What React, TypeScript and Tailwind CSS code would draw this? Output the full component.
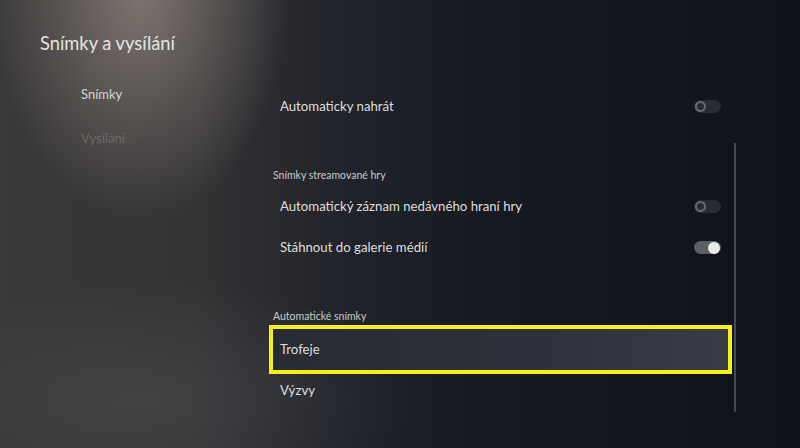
const Toggle = ({ on }: { on?: boolean }) => {
  if (on) {
    return (
      <div className="flex h-[13px] w-[27px] items-center justify-end rounded-full bg-[#5d5f67] pr-[1px]">
        <div className="h-[12px] w-[12px] rounded-full bg-[#ececec]" />
      </div>
    )
  }
  return (
    <div className="flex h-[13px] w-[27px] items-center rounded-full bg-[#2a2c35] pl-[1px]">
      <div className="h-[11px] w-[11px] rounded-full border-2 border-[#686a72]" />
    </div>
  )
}

const Row = ({ label, toggle, focused }: { label: string; toggle?: "on" | "off"; focused?: boolean }) => (
  <div
    className={
      "flex h-[41px] items-center justify-between px-[7px] " +
      (focused
        ? "outline-4 outline-[#f6ef1e] bg-[linear-gradient(to_right,#282b33,#2f323c_60%,#383c46)]"
        : "")
    }
  >
    <span className="text-[13.2px] text-[#dedede]">{label}</span>
    {toggle && <Toggle on={toggle === "on"} />}
  </div>
)

const Header = ({ children }: { children: string }) => (
  <div className="mt-[37px] h-[22px] text-[10.5px] leading-[22px] text-[#c9c9c9]">{children}</div>
)

export default function App() {
  return (
    <div
      className="h-[448px] w-[800px] overflow-hidden bg-[radial-gradient(ellipse_150px_230px_at_140px_-10px,rgba(175,160,150,0.6),transparent),radial-gradient(ellipse_260px_120px_at_150px_400px,rgba(90,92,96,0.35),transparent),linear-gradient(to_right,#3a3839_0%,#343335_25%,#22242b_42%,#171a22_60%,#10121b_100%)] text-white"
      style={{ fontFamily: 'Lato, "Open Sans", sans-serif' }}
    >
      <h1 className="pl-[40px] pt-[30px] text-[18.3px] font-normal leading-[26px] text-[#e4e4e4]">
        Snímky a vysílání
      </h1>
      <div className="flex">
        <nav className="w-[273px] pl-[81px] pt-[17px] text-[13px]">
          <div className="flex h-[44px] items-center text-[#d4d4d4]">Snímky</div>
          <div className="flex h-[44px] items-center text-[#6c6868]">Vysílání</div>
        </nav>
        <div className="w-[455px] pt-[30px]">
          <Row label="Automaticky nahrát" toggle="off" />
          <Header>Snímky streamované hry</Header>
          <Row label="Automatický záznam nedávného hraní hry" toggle="off" />
          <Row label="Stáhnout do galerie médií" toggle="on" />
          <Header>Automatické snímky</Header>
          <div className="mt-[2px]">
            <Row label="Trofeje" focused />
          </div>
          <Row label="Výzvy" />
        </div>
        <div className="ml-[6px] mt-[87px] h-[269px] w-[2px] bg-[#474a54]" />
      </div>
    </div>
  )
}
